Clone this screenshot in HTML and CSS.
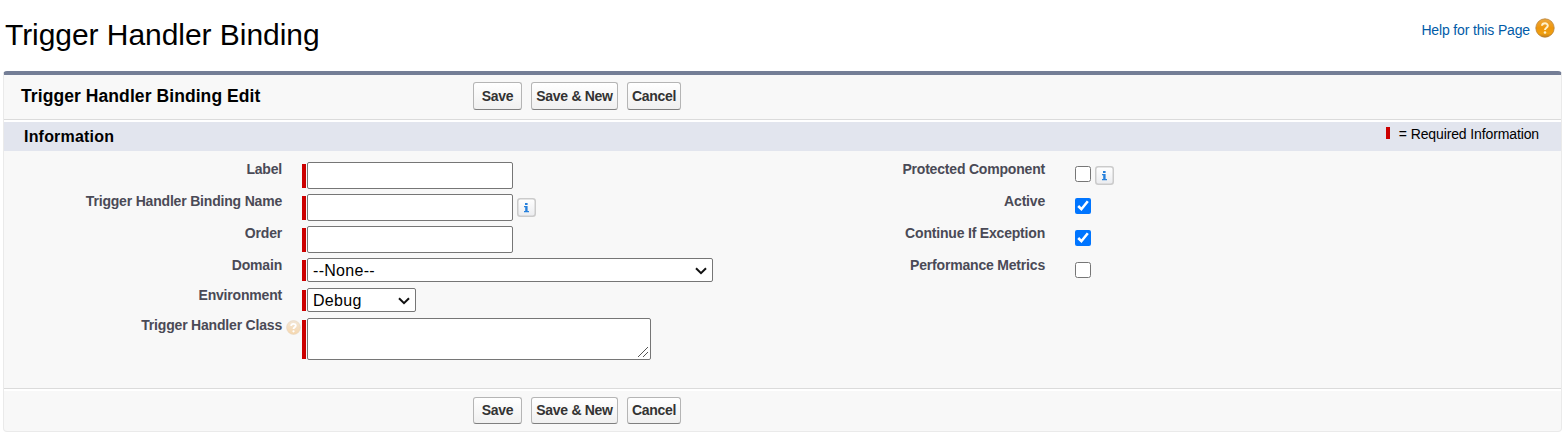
FILE: index.html
```html
<!DOCTYPE html>
<html lang="en">
<head>
<meta charset="utf-8">
<title>Trigger Handler Binding</title>
<link rel="stylesheet" href="styles.css">
</head>
<body>
<svg class="defs" width="0" height="0" aria-hidden="true">
  <defs>
    <linearGradient id="orb" x2="0" y2="1"><stop offset="0" stop-color="#eda93f"/><stop offset=".5" stop-color="#ee950b"/><stop offset=".8" stop-color="#f0a010"/><stop offset="1" stop-color="#c07c1c"/></linearGradient>
    <linearGradient id="orb-pale" x2="0" y2="1"><stop offset="0" stop-color="#f2e6d6"/><stop offset="1" stop-color="#f6d7ae"/></linearGradient>
    <symbol id="help" viewBox="0 0 20 20"><circle cx="10" cy="10" r="9.2" fill="url(#orb)" stroke="#b98238" stroke-width=".8"/><path d="M7 7.8C7.2 4.5 12.9 4.6 12.8 7.7C12.7 9.7 10 9.7 10 12" fill="none" stroke="#fff1cb" stroke-width="2"/><circle cx="10" cy="14.5" r="1.3" fill="#fff1cb"/></symbol>
    <symbol id="hint" viewBox="0 0 20 20"><circle cx="10" cy="10" r="9.2" fill="url(#orb-pale)" stroke="#e8d5bd" stroke-width=".8"/><path d="M6.8 7.8C7 4.2 13.1 4.3 13 7.7C12.9 9.7 10 9.7 10 12" fill="none" stroke="#fff" stroke-width="2.5"/><circle cx="10" cy="15" r="1.5" fill="#fff"/></symbol>
    <linearGradient id="tile" x2="0" y2="1"><stop offset="0" stop-color="#fff"/><stop offset="1" stop-color="#ebecef"/></linearGradient>
    <symbol id="info" viewBox="0 0 19 19"><rect x=".75" y=".75" width="17.5" height="17.5" rx="2.5" fill="url(#tile)" stroke="#cbcbcb" stroke-width="1.5"/><path d="M8 5h2.6v2H8zM7 8h3.6v5H12v1.2H7V13h1.2V9.2H7z" fill="#2680dc"/></symbol>
    <symbol id="chevron" viewBox="0 0 12 8"><path d="M1 1.2L6 6.2L11 1.2" fill="none" stroke="#111" stroke-width="2"/></symbol>
    <symbol id="grip" viewBox="0 0 10 10"><path d="M0 10L10 0M5 10L10 5" fill="none" stroke="#555"/></symbol>
  </defs>
</svg>
<header class="page-head">
  <h1>Trigger Handler Binding</h1>
  <a class="help"><span>Help for this Page</span><svg width="20" height="20"><use href="#help"/></svg></a>
</header>
<main class="panel">
  <div class="bar top">
    <h2>Trigger Handler Binding Edit</h2>
    <div class="buttons"><button class="save">Save</button><button class="save-new">Save &amp; New</button><button class="cancel">Cancel</button></div>
  </div>
  <div class="section"><h3>Information</h3><div class="legend"><i></i><span>= Required Information</span></div></div>
  <div class="fields">
    <div class="col left">
      <div class="row"><label>Label</label><div class="req"><input type="text"></div></div>
      <div class="row"><label>Trigger Handler Binding Name</label><div class="req"><input type="text"></div><svg class="info" width="19" height="19"><use href="#info"/></svg></div>
      <div class="row"><label>Order</label><div class="req"><input type="text"></div></div>
      <div class="row short"><label>Domain</label><div class="req"><select class="wide"><option>--None--</option></select><svg class="chevron" width="12" height="8"><use href="#chevron"/></svg></div></div>
      <div class="row short"><label>Environment</label><div class="req"><select class="narrow"><option>Debug</option></select><svg class="chevron" width="12" height="8"><use href="#chevron"/></svg></div></div>
      <div class="row tall"><label>Trigger Handler Class</label><svg class="hint" width="15" height="15"><use href="#hint"/></svg><div class="req"><textarea></textarea><svg class="grip" width="10" height="10"><use href="#grip"/></svg></div></div>
    </div>
    <div class="col right">
      <div class="row"><label>Protected Component</label><input type="checkbox"><svg class="info" width="19" height="19"><use href="#info"/></svg></div>
      <div class="row"><label>Active</label><input type="checkbox" checked></div>
      <div class="row"><label>Continue If Exception</label><input type="checkbox" checked></div>
      <div class="row"><label>Performance Metrics</label><input type="checkbox"></div>
    </div>
  </div>
  <div class="bar bottom">
    <div class="buttons"><button class="save">Save</button><button class="save-new">Save &amp; New</button><button class="cancel">Cancel</button></div>
  </div>
</main>
</body>
</html>
```
FILE: styles.css
```css
* { box-sizing: border-box; }
body { margin: 0; height: 442px; overflow: hidden; background: #fff; color: #000; font-family: "Liberation Sans", Arial, sans-serif; }
h1, h2, h3 { margin: 0; }
.defs { display: block; height: 0; }
.page-head { height: 71px; padding: 17px 12px 0 5px; display: flex; justify-content: space-between; align-items: flex-start; }
h1 { font-size: 30px; line-height: 36px; font-weight: 400; letter-spacing: -0.05px; }
.help { display: flex; gap: 5px; color: #015ba7; font-size: 14px; letter-spacing: -0.15px; line-height: 26px; }
.help svg { margin-top: 1px; }
.panel { margin: 0 5px 0 3px; height: 361px; background: #f8f8f8; border: 1px solid #eaeaea; border-top: 4px solid #747e96; border-radius: 4px; display: flex; flex-direction: column; }
.bar { display: flex; align-items: flex-start; }
.top { height: 47px; padding: 7px 0 0 17px; border-bottom: 2px solid #fff; box-shadow: inset 0 -1px #dbdbdb; }
.top h2 { width: 452px; font-size: 17.5px; letter-spacing: 0.08px; line-height: 28px; }
.bottom { height: 43px; margin-top: auto; padding: 8px 0 0 469px; border-top: 1px solid #dbdbdb; box-shadow: inset 0 2px #fff; }
.buttons { display: flex; gap: 9px; }
button { height: 28px; padding: 0; border: 1px solid #b5b5b5; border-bottom-color: #7f7f7f; border-radius: 3px; background: linear-gradient(#fff, #f0f0f0); color: #333; font: bold 14px/24px "Liberation Sans", Arial, sans-serif; letter-spacing: -0.3px; }
.bottom button { height: 27px; line-height: 23px; padding-bottom: 1px; }
.save { width: 49px; }
.save-new { width: 87px; }
.cancel { width: 54px; }
.section { height: 29px; padding: 0 22px 0 20px; background: #e2e5ee; display: flex; justify-content: space-between; }
h3 { font-size: 16px; line-height: 29px; letter-spacing: 0.2px; }
.legend { display: flex; gap: 9px; font-size: 14px; letter-spacing: -0.12px; line-height: 24px; }
.legend i { width: 4px; height: 12px; margin-top: 5px; background: #c00; }
.fields { display: flex; padding-top: 11px; }
.col.left { width: 763px; }
.row { height: 32px; display: flex; align-items: flex-start; }
.row.short { height: 30px; }
label { width: 278px; text-align: right; color: #4a4a56; font-size: 14px; letter-spacing: -0.19px; font-weight: 700; line-height: 14px; margin-right: 20px; white-space: nowrap; }
.row.tall label { margin-right: 4px; }
.hint { margin: 2px 1px 0 0; }
.right label { margin-right: 30px; }
.req { display: flex; position: relative; padding-left: 5px; }
.req::before { content: ""; position: absolute; left: 0; top: 2px; bottom: 1px; width: 4px; background: #c00; }
input[type="text"], select, textarea { display: block; margin: 0; border: 1px solid #767676; border-radius: 2px; background-color: #fff; color: #000; font: 16px "Liberation Sans", Arial, sans-serif; }
input[type="text"] { width: 206px; height: 27px; }
select { appearance: none; height: 24px; padding: 0 5px; letter-spacing: 0.3px; }
.wide { width: 406px; }
.narrow { width: 109px; }
.chevron { position: absolute; right: 6px; top: 9px; pointer-events: none; }
textarea { width: 344px; height: 42px; resize: none; overflow: hidden; }
.grip { position: absolute; right: 3px; bottom: 3px; }
.info { margin: 4px 0 0 4px; }
input[type="checkbox"] { width: 16px; height: 16px; margin: 4px 0 0; }
```
